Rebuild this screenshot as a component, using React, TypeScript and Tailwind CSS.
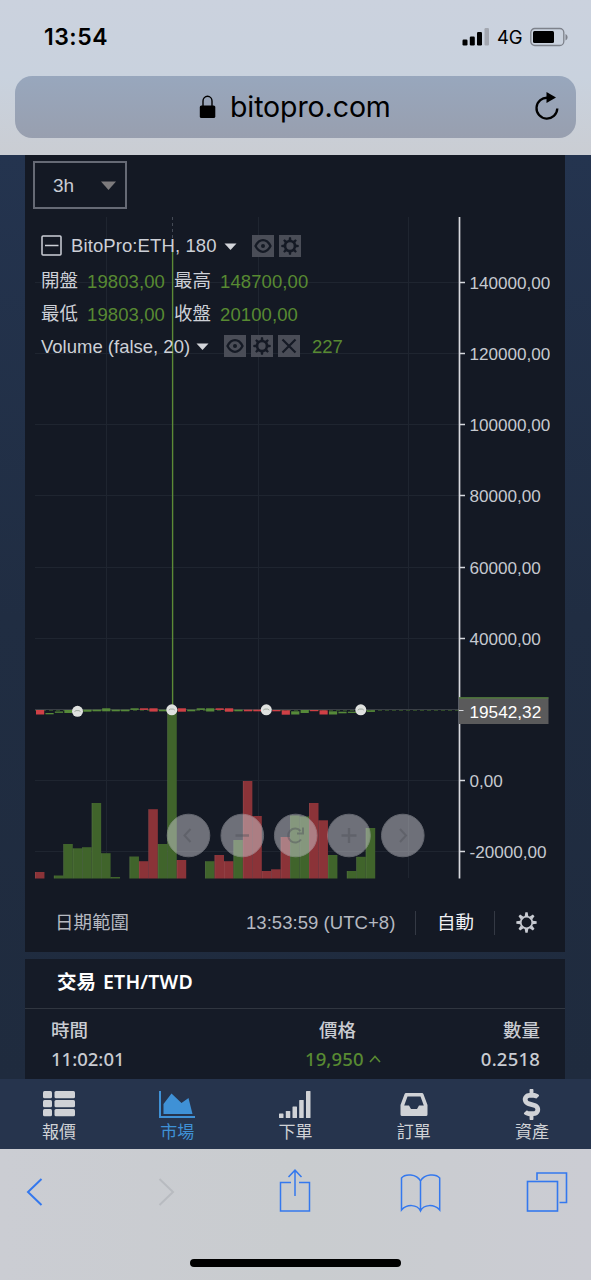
import type { ReactNode } from 'react';
import { FaDollarSign } from 'react-icons/fa';

type Side = 'up' | 'down';

const UP = '#40642b';
const DOWN = '#8b3338';
const BASE = 878.5;
const STEP = 9.45;

// [slot, top, side]
const volumes: Array<[number, number, Side]> = [
  [0, 872, 'down'], [2, 875.5, 'up'], [3, 844, 'up'], [4, 848.3, 'up'], [5, 847.2, 'up'],
  [6, 803, 'up'], [7, 853.2, 'up'], [8, 877, 'up'], [10, 856.5, 'up'], [11, 861.2, 'down'],
  [12, 809.2, 'down'], [13, 844, 'up'], [14, 711, 'up'], [15, 860, 'down'], [18, 861.2, 'up'],
  [19, 855, 'down'], [20, 861.2, 'down'], [21, 840, 'up'], [22, 781, 'down'], [23, 816, 'down'],
  [24, 871, 'down'], [25, 869.3, 'down'], [26, 837, 'down'], [27, 815.5, 'up'], [28, 816.5, 'up'],
  [29, 803, 'down'], [30, 820.3, 'down'], [31, 855, 'up'], [33, 871, 'up'], [34, 856.8, 'up'],
  [35, 828, 'up'],
];

// [slot, top, height, side]
const candles: Array<[number, number, number, Side]> = [
  [0, 710, 4.5, 'down'], [1, 713, 1.3, 'up'], [2, 711.5, 1.3, 'up'], [3, 710, 3, 'up'],
  [4, 709.5, 2, 'up'], [5, 709.7, 2, 'up'], [6, 709.7, 1.6, 'up'], [7, 708.3, 3, 'up'],
  [8, 709.7, 1.6, 'up'], [9, 709.7, 1.6, 'up'], [10, 708.3, 1.6, 'up'], [11, 708.3, 1.6, 'down'],
  [12, 708.3, 3.3, 'down'], [13, 709.7, 1.6, 'up'], [14, 709, 2, 'up'], [15, 708.3, 3.4, 'down'],
  [16, 709.7, 1.6, 'up'], [17, 708.3, 1.6, 'up'], [18, 708.3, 3.2, 'up'], [19, 708.3, 1.6, 'down'],
  [20, 708.3, 3.4, 'down'], [21, 709.7, 1.6, 'up'], [22, 709.7, 1.6, 'down'], [23, 709.7, 1.6, 'down'],
  [24, 709.7, 1.6, 'down'], [25, 710, 1.3, 'down'], [26, 710.3, 4.4, 'down'], [27, 711.3, 3.2, 'up'],
  [28, 710, 3, 'up'], [29, 710, 1.2, 'down'], [30, 710.3, 4.2, 'down'], [31, 711.3, 3.2, 'up'],
  [32, 711.7, 1.6, 'up'], [33, 711.7, 1.2, 'up'], [34, 710, 1.3, 'up'], [35, 710.3, 1.6, 'up'],
];

const ticks: Array<[number, string]> = [
  [282.5, '140000,00'], [353.5, '120000,00'], [424.5, '100000,00'], [495.5, '80000,00'], [567.5, '60000,00'],
  [638.5, '40000,00'], [780.5, '0,00'], [851.5, '-20000,00'],
];

const SANS = 'font-["Liberation_Sans","Noto_Sans_CJK_TC",sans-serif]';

function Gear({ size, stroke }: { size: number; stroke: number }) {
  return (
    <svg width={size} height={size} viewBox="-12 -12 24 24" fill="none" stroke="currentColor">
      <circle r="6.600" strokeWidth={stroke} />
      {[0, 45, 90, 135, 180, 225, 270, 315].map((angle) => (
        <path key={angle} d="M-2.100 -7L-1.300 -11.600H1.300L2.100 -7z" fill="currentColor" stroke="none" transform={`rotate(${angle})`} />
      ))}
    </svg>
  );
}

function Eye() {
  return (
    <svg width="18" height="18" viewBox="0 0 18 18" fill="none" stroke="currentColor" strokeWidth="2.300">
      <path d="M1.500 9C3.500 5 6 3.200 9 3.200s5.500 1.800 7.500 5.800c-2 4-4.500 5.800-7.500 5.800S3.500 13 1.500 9z" />
      <circle cx="9" cy="9" r="2" fill="currentColor" stroke="none" />
    </svg>
  );
}

function Tool({ children }: { children: ReactNode }) {
  return <span className="flex h-[22px] w-[22px] items-center justify-center bg-[#4a4d57] text-[#151a25]">{children}</span>;
}

function Caret() {
  return (
    <svg width="13" height="7" viewBox="0 0 13 7" fill="#d3d5da">
      <path d="M0.500 0.500h12L6.500 7z" />
    </svg>
  );
}

function Quote({ label, value, className }: { label: string; value: string; className: string }) {
  return (
    <div className={`flex items-center gap-[9px] ${className}`}>
      <span>{label}</span>
      <span className="pt-[2px] tracking-[0.1px] text-[#588a32]">{value}</span>
    </div>
  );
}

function BrowserBar() {
  return (
    <header className='h-[155px] shrink-0 bg-linear-to-b from-[#cbd2de] via-[#c9d2de] to-[#cacdd3] px-[15px] font-["Inter",sans-serif] text-black'>
      <div className="flex h-[76px] items-center justify-between pr-[8px] pl-[29px]">
        <span className="mt-[-2px] text-[23px] font-semibold tracking-[0.500px]">13:54</span>
        <div className="mt-[-2px] flex items-center">
          <svg width="28" height="18" viewBox="0 0 28 18">
            <rect x="0.500" y="11.500" width="5" height="6" rx="1.200" />
            <rect x="7.800" y="8.500" width="5" height="9" rx="1.200" />
            <rect x="15" y="4" width="5" height="13.500" rx="1.200" />
            <rect x="22.500" y="0" width="4.500" height="17.500" rx="1.200" fill="#a3a7b0" />
          </svg>
          <span className="ml-[7px] w-[26px] pt-[2px] text-[18.500px] tracking-[-0.2px]">4G</span>
          <svg className="ml-[7px]" width="38" height="20" viewBox="0 0 38 20">
            <rect x="0.800" y="1.500" width="33" height="17" rx="4" fill="none" stroke="#7e828b" strokeWidth="1.300" />
            <rect x="3" y="4" width="21" height="12" rx="1.500" />
            <path d="M35.500 7v6.500c1.600-.7 2-2 2-3.250s-.4-2.550-2-3.250z" fill="#7e828b" />
          </svg>
        </div>
      </div>
      <div className="flex h-[62px] w-[561px] items-center rounded-[17px] bg-linear-to-b from-[#98a7bd] to-[#989faf] pr-[15px] pl-[184px]">
        <svg width="17" height="24" viewBox="0 0 17 24">
          <path d="M4 11V6a4.500 4.800 0 0 1 9 0v5" fill="none" stroke="#000" strokeWidth="1.400" />
          <rect x="0.800" y="10.500" width="15.500" height="12.500" rx="1.600" />
        </svg>
        <span className="ml-[14px] text-[28.500px] tracking-[-0.100px] whitespace-nowrap">bitopro.com</span>
        <svg className="mt-[-1px] ml-auto" width="28" height="32" viewBox="0 0 28 32">
          <path d="M15 6.800A10.400 10.400 0 1 0 24.300 17.500" fill="none" stroke="#000" strokeWidth="2.300" />
          <path d="M13.500 1L23 6.500L13.500 12z" />
        </svg>
      </div>
    </header>
  );
}

function PriceChart() {
  return (
    <svg className="block" width="540" height="670" viewBox="25 209 540 670" fontFamily="Liberation Sans">
      <g stroke="#1f2530" strokeWidth="1">
        {[106.5, 258.5, 408.5].map((x) => <path key={x} d={`M${x} 217V878`} />)}
        {ticks.map(([y]) => <path key={y} d={`M35 ${y}H459`} />)}
      </g>
      <path d="M172.500 217V250" stroke="#444a55" strokeDasharray="3 3" />
      <path d="M35 709.500H459" stroke="#3a3f46" />
      <path d="M35 710.500H459" stroke="#304a29" strokeDasharray="4 3" />
      {volumes.map(([slot, top, side]) => (
        <g key={slot}>
          <rect x={35 + slot * STEP} y={top} width={STEP} height={BASE - top} fill={side === 'up' ? UP : DOWN} />
          <path d={`M${35 + slot * STEP + 0.3} ${top}V${BASE}`} stroke="#fff" strokeWidth="0.600" opacity="0.120" />
        </g>
      ))}
      <path d="M172.600 250V710" stroke="#5c8a36" strokeWidth="1.400" />
      {candles.map(([slot, top, height, side]) => (
        <rect key={slot} x={36 + slot * STEP} y={top} width={8.2} height={height} fill={side === 'up' ? '#568a39' : '#cf4046'} />
      ))}
      {[[77.5, 711.3], [171.8, 709.8], [266.3, 709.8], [360.8, 709.8]].map(([x, y]) => (
        <g key={x}>
          <circle cx={x} cy={y} r="5.500" fill="#dfe1df" />
          <path d={`M${x - 3} ${y + 0.3}l1.500 -1h3l1.500 1`} stroke="#98a399" strokeWidth="0.900" fill="none" />
        </g>
      ))}
      <path d="M459.500 217V878.500" stroke="#d6d8dd" strokeWidth="1.700" />
      {ticks.map(([y, label]) => (
        <g key={label}>
          <path d={`M460 ${y}H465`} stroke="#d6d8dd" strokeWidth="1.500" />
          <text x="469.500" y={y + 6.7} fontSize="17.100" fill="#c6c9d0">{label}</text>
        </g>
      ))}
      <rect x="550" y="217" width="15" height="661" fill="#141924" />
      <rect x="459" y="697.500" width="89.500" height="26.500" fill="#5a5a5b" />
      <path d="M459 697.800H548.500" stroke="#518038" strokeWidth="1.300" />
      <path d="M459 710.500H463.500" stroke="#d6d8dd" />
      <text x="469.500" y="717.700" fontSize="17.200" fill="#fff">19542,32</text>
      {[188.5, 242.3, 295.7, 349, 402.8].map((x) => (
        <circle key={x} cx={x} cy="835.500" r="21.300" fill="#d0d0d6" stroke="#b8b8be" opacity="0.480" />
      ))}
      <g stroke="#50525a" strokeWidth="2" fill="none" opacity="0.450">
        <path d="M190.500 829l-6 6.500l6 6.500" />
        <path d="M235.500 835.500h13.500" strokeWidth="2.500" />
        <path d="M301 839.500a7 7 0 1 1 -0.500 -8.500M303 827.500v6h-6" />
        <path d="M341.500 835.500h15M349 828v15" strokeWidth="2.300" />
        <path d="M400 829l6 6.500l-6 6.500" />
      </g>
    </svg>
  );
}

function Legend() {
  return (
    <div className="absolute top-[75px] left-[16px] text-[18.500px] leading-none whitespace-nowrap text-[#cdd0d7]">
      <div className="flex h-[31px] items-center">
        <svg width="21" height="21" viewBox="0 0 21 21" fill="none" stroke="#cdd0d7" strokeWidth="1.500">
          <rect x="1" y="1" width="19" height="19" rx="1" />
          <path d="M4 10.500H17.500" />
        </svg>
        <span className="ml-[9px] w-[147px] pt-[2px] tracking-[0.100px]">BitoPro:ETH, 180</span>
        <span className="ml-[6px] w-[13px] pt-[2px]"><Caret /></span>
        <div className="ml-[15px] flex gap-[5px]">
          <Tool><Eye /></Tool>
          <Tool><Gear size={18} stroke={3.5} /></Tool>
        </div>
      </div>
      <div className="mt-[4px] flex h-[33px] items-center">
        <Quote label="開盤" value="19803,00" className="w-[133px]" />
        <Quote label="最高" value="148700,00" className="" />
      </div>
      <div className="flex h-[33px] items-center">
        <Quote label="最低" value="19803,00" className="w-[133px]" />
        <Quote label="收盤" value="20100,00" className="" />
      </div>
      <div className="flex h-[31px] items-center">
        <span className="w-[149px] pt-px">Volume (false, 20)</span>
        <span className="ml-[6px] w-[13px]"><Caret /></span>
        <div className="mt-[-1px] ml-[15px] flex gap-[5px]">
          <Tool><Eye /></Tool>
          <Tool><Gear size={18} stroke={3.5} /></Tool>
          <Tool>
            <svg width="16" height="16" viewBox="0 0 16 16" stroke="currentColor" strokeWidth="2.200"><path d="M1.500 1.500l13 13M14.500 1.500l-13 13" /></svg>
          </Tool>
        </div>
        <span className="ml-[12px] pt-px text-[#588a32]">227</span>
      </div>
    </div>
  );
}

function ChartPanel() {
  return (
    <section className={`relative h-[797px] bg-[#141924] ${SANS}`}>
      <div className="h-[54px] pt-[6px] pl-[8px]">
        <div className="flex h-[48px] w-[94px] items-center justify-between border-2 border-[#666a75] pr-[9px] pl-[18px] text-[19px] text-[#c9ccd4]">
          <span className="pt-[3px]">3h</span>
          <svg width="15" height="9" viewBox="0 0 15 9" fill="#7d7b7d"><path d="M0 0.500h15L7.500 9z" /></svg>
        </div>
      </div>
      <PriceChart />
      <Legend />
      <div className="flex h-[73px] items-center pt-[14px] pr-[28px] pl-[30px] text-[18.500px] text-[#b6b9c1]">
        <span>日期範圍</span>
        <span className="ml-auto w-[150px] tracking-[0.050px] whitespace-nowrap">13:53:59 (UTC+8)</span>
        <span className="ml-[19px] h-[24px] w-px bg-[#343944]" />
        <span className="ml-[21px] text-[#f0f1f4]">自動</span>
        <span className="ml-[20px] h-[24px] w-px bg-[#343944]" />
        <span className="ml-[21px] text-[#c8cbd2]"><Gear size={21} stroke={2} /></span>
      </div>
    </section>
  );
}

function TradesPanel() {
  return (
    <section className='mt-[7px] h-[121px] bg-[#151b27] font-["Noto_Sans","Noto_Sans_CJK_TC",sans-serif] text-[18.500px] font-medium text-[#c9ccd2]'>
      <h2 className="flex h-[50px] items-center gap-[7px] border-b border-[#303640] pb-[4px] pl-[32px] text-[19.500px] font-semibold text-white">
        <span>交易</span>
        <span className="tracking-[0.200px]">ETH/TWD</span>
      </h2>
      <div className="flex h-[35px] items-center pt-[6px] pr-[25px] pl-[26px]">
        <span className="w-[268px]">時間</span>
        <span>價格</span>
        <span className="ml-auto">數量</span>
      </div>
      <div className="flex h-[30px] items-center pr-[25px] pl-[26px]">
        <span className="w-[254px]">11:02:01</span>
        <span className="flex items-center gap-[5px] text-[#588a32]">
          <span className="tracking-[0.100px]">19,950</span>
          <svg width="12" height="8" viewBox="0 0 12 8" fill="none" stroke="currentColor" strokeWidth="1.600"><path d="M1 7l5-5.500l5 5.500" /></svg>
        </span>
        <span className="ml-auto tracking-[0.200px]">0.2518</span>
      </div>
    </section>
  );
}

const tabs: Array<{ label: string; icon: ReactNode; active?: boolean }> = [
  {
    label: '報價',
    icon: (
      <svg width="32" height="32" viewBox="0 0 32 32" fill="currentColor">
        {[3, 12, 21].map((y) => (
          <g key={y}>
            <rect x="0" y={y} width="9" height="7.200" rx="1.500" />
            <rect x="11.500" y={y} width="20.500" height="7.200" rx="1.500" />
          </g>
        ))}
      </svg>
    ),
  },
  {
    label: '市場',
    active: true,
    icon: (
      <svg width="36" height="32" viewBox="0 0 36 32" fill="currentColor">
        <path d="M0 3h2v25h34v2H0z" />
        <path d="M4.500 26V16L12.500 5.500L22.500 15L29.500 10L33.500 26z" />
      </svg>
    ),
  },
  {
    label: '下單',
    icon: (
      <svg width="32" height="32" viewBox="0 0 32 32" fill="currentColor">
        <rect x="0" y="25.500" width="4.500" height="4.500" rx=".6" />
        <rect x="6.800" y="23" width="4.500" height="7" rx=".6" />
        <rect x="13.500" y="18.500" width="4.500" height="11.500" rx=".6" />
        <rect x="20.200" y="12" width="4.500" height="18" rx=".6" />
        <rect x="27" y="3" width="4.500" height="27" rx=".6" />
      </svg>
    ),
  },
  {
    label: '訂單',
    icon: (
      <svg width="28" height="32" viewBox="0 0 28 32" fill="currentColor" fillRule="evenodd">
        <path d="M6 5h16q1 0 1.400 1L27.500 17V26.500q0 1.500-1.500 1.500H2q-1.500 0-1.500-1.500V17L4.600 6Q5 5 6 5zM7.500 8.500L4.200 17.500H9L11 21h6L19 17.500h4.800L20.500 8.500z" />
      </svg>
    ),
  },
  { label: '資產', icon: <FaDollarSign size={31} /> },
];

function TabBar() {
  return (
    <nav className='grid h-[70px] shrink-0 grid-cols-5 bg-[#26344d] font-["Noto_Sans_CJK_TC",sans-serif] text-[17px] leading-none'>
      {tabs.map((tab) => (
        <a key={tab.label} className={`flex flex-col items-center pt-[9px] ${tab.active ? 'text-[#3f91d6]' : 'text-[#d0d2d6]'}`}>
          <span className="flex h-[32px] items-center">{tab.icon}</span>
          <span className="mt-[2px]">{tab.label}</span>
        </a>
      ))}
    </nav>
  );
}

function BrowserToolbar() {
  return (
    <footer className="flex h-[131px] flex-col items-center bg-linear-to-r from-[#cbcdd3] via-[#c9cccf] to-[#cbccd3] text-[#3478ee]">
      <div className="flex h-[85px] w-full items-center pl-[26px]">
        <svg width="17" height="30" viewBox="0 0 17 30" fill="none" stroke="currentColor" strokeWidth="2"><path d="M15.500 2L2 15l13.500 13" /></svg>
        <svg className="ml-[115px]" width="17" height="30" viewBox="0 0 17 30" fill="none" stroke="#b8bbc0" strokeWidth="2"><path d="M1.500 2L15 15L1.500 28" /></svg>
        <svg className="mt-[-3px] ml-[104px]" width="32" height="44" viewBox="0 0 32 44" fill="none" stroke="currentColor" strokeWidth="1.500">
          <path d="M12 14.500H1.500v28.500h29V14.500H20M16 28V2.500M9.500 9L16 2.200L22.500 9" />
        </svg>
        <svg className="mt-[2px] ml-[89px]" width="42" height="40" viewBox="0 0 42 40" fill="none" stroke="currentColor" strokeWidth="1.500">
          <path d="M20.500 8C16.500 .5 5 .5 1.500 5V37C7 31 17 31 20.500 38C24 31 34 31 39.700 37V5C36 .5 24.500 .5 20.500 8zM20.500 8V38" />
        </svg>
        <svg className="ml-[84px]" width="42" height="40" viewBox="0 0 42 40" fill="none" stroke="currentColor" strokeWidth="1.600">
          <rect x="1.500" y="9.500" width="30" height="29.500" />
          <path d="M11 8V1H40.500V30.500H33.500" />
        </svg>
      </div>
      <div className="mt-[25px] h-[8px] w-[211px] rounded-full bg-black" />
    </footer>
  );
}

export default function App() {
  return (
    <div className="flex h-[1280px] w-[591px] flex-col overflow-hidden">
      <BrowserBar />
      <main className="h-[924px] shrink-0 overflow-hidden bg-linear-to-b from-[#24344f] via-[#202d42] to-[#1f2b3e] pr-[26px] pl-[25px]">
        <ChartPanel />
        <TradesPanel />
      </main>
      <TabBar />
      <BrowserToolbar />
    </div>
  );
}
